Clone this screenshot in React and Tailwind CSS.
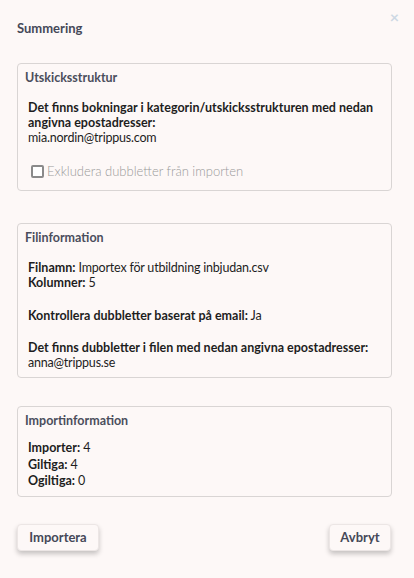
import React from 'react';

const Card = ({ title, children, className = '' }) => (
  <div className={`rounded-[4px] border border-[#d9d5d4] px-[7px] pt-[5px] ${className}`}>
    <h3 className="text-[12.5px] font-bold leading-[18px] text-[#4b4e5c]">{title}</h3>
    <div className="px-[3px] text-[12.5px] leading-[15px] tracking-[-0.2px] text-[#1e1e1e] [&_b]:tracking-normal">
      {children}
    </div>
  </div>
);

export default function App() {
  return (
    <div
      className="relative h-[578px] w-[414px] bg-[#fdf8f7] pl-[17px] pr-[22px] pt-[19px]"
      style={{ fontFamily: 'Lato, "Open Sans", sans-serif' }}
    >
      <span className="absolute right-[15px] top-[9px] text-[16px] font-bold leading-none text-[#cdd8e4]">×</span>
      <h2 className="text-[13px] font-bold leading-[18px] text-[#454858]">Summering</h2>

      <div className="mt-[26px] flex flex-col">
        <Card title="Utskicksstruktur" className="h-[128px]">
          <p className="mt-[13px]">
            <b>Det finns bokningar i kategorin/utskicksstrukturen med nedan angivna epostadresser:</b>
            <br />
            mia.nordin@trippus.com
          </p>
          <label className="mt-[18px] flex h-[16px] items-center gap-[3px] pl-[3px] text-[13px] font-light tracking-normal text-[#9a9a9a]">
            <span className="inline-block h-[13px] w-[13px] rounded-[2px] border-2 border-[#8a8a8a] bg-white" />
            Exkludera dubbletter från importen
          </label>
        </Card>

        <Card title="Filinformation" className="mt-[32px] h-[155px]">
          <p className="mt-[13px]">
            <b>Filnamn:</b> Importex för utbildning inbjudan.csv
            <br />
            <b>Kolumner:</b> 5
          </p>
          <p className="mt-[18px]">
            <b>Kontrollera dubbletter baserat på email:</b> Ja
          </p>
          <p className="mt-[17px]">
            <b>Det finns dubbletter i filen med nedan angivna epostadresser:</b>
            <br />
            anna@trippus.se
          </p>
        </Card>

        <Card title="Importinformation" className="mt-[28px] h-[91px]">
          <p className="mt-[10px] leading-[16.5px]">
            <b>Importer:</b> 4
            <br />
            <b>Giltiga:</b> 4
            <br />
            <b>Ogiltiga:</b> 0
          </p>
        </Card>

        <div className="mt-[27px] flex justify-between pr-px">
          <button className="h-[27px] w-[82px] rounded-[4px] border border-[#ece6e5] bg-[#fdf8f7] text-[13px] font-bold text-[#454858] shadow-[0_3px_5px_rgba(0,0,0,0.22)]">
            Importera
          </button>
          <button className="h-[27px] w-[62px] rounded-[4px] border border-[#ece6e5] bg-[#fdf8f7] text-[13px] font-bold text-[#454858] shadow-[0_3px_5px_rgba(0,0,0,0.22)]">
            Avbryt
          </button>
        </div>
      </div>
    </div>
  );
}
